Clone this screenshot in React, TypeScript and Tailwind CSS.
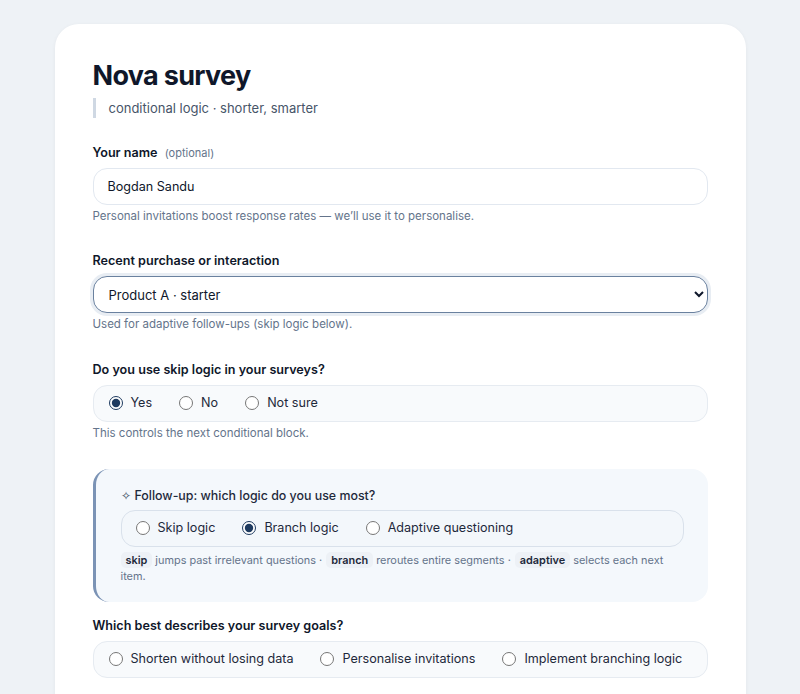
import * as React from "react";

const font = { fontFamily: "Inter, 'Noto Sans', sans-serif" };

type Opt = { id: string; label: string };

function RadioRow({
  name,
  options,
  value,
  tint = "bg-[#f8fafc] border-[#e6ebf1]",
  pad = "pl-[15px]",
}: {
  name: string;
  options: Opt[];
  value?: string;
  tint?: string;
  pad?: string;
}): JSX.Element {
  const [sel, setSel] = React.useState(value);
  return (
    <div
      className={`flex h-[37px] items-center gap-x-[27px] rounded-[14px] border ${tint} ${pad}`}
    >
      {options.map((o) => (
        <label
          key={o.id}
          className="flex cursor-pointer items-center text-[12.6px] text-[#1e293b]"
        >
          <input
            type="radio"
            name={name}
            checked={sel === o.id}
            onChange={() => setSel(o.id)}
            className="m-0 mr-2 h-[14px] w-[14px] accent-[#1e3a5f]"
          />
          {o.label}
        </label>
      ))}
    </div>
  );
}

function Label({ children }: { children: React.ReactNode }): JSX.Element {
  return (
    <div className="mb-[5px] text-[12.6px] font-semibold leading-5 text-[#0f172a]">
      {children}
    </div>
  );
}

function Help({ children }: { children: React.ReactNode }): JSX.Element {
  return <p className="mt-[3px] text-[11.5px] leading-4 text-[#64748b]">{children}</p>;
}

// small code-ish tag used inside the follow-up hint
function Chip({ children }: { children: React.ReactNode }): JSX.Element {
  return (
    <code
      className="ml-[4px] mr-[3px] inline-block rounded-[5px] bg-[#edf1f6] px-[5px] text-[10.9px] font-semibold leading-4 text-[#1e293b] first:ml-0"
      style={font}
    >
      {children}
    </code>
  );
}

export default function App(): JSX.Element {
  const [name, setName] = React.useState("Bogdan Sandu");
  return (
    <div className="min-h-[694px] bg-[#eef2f6] pt-6" style={font}>
      <div className="mx-auto w-[691px] rounded-3xl bg-white px-[38px] pb-10 pt-[34px] shadow-[0_1px_4px_rgba(15,23,42,0.05)]">
        <h1 className="text-[27px] font-bold leading-9 tracking-tight text-[#0f172a]">
          Nova survey
        </h1>
        <p className="mt-1 border-l-[3px] border-[#cfd8e3] pl-[13px] text-[13px] leading-5 text-[#475569]">
          conditional logic · shorter, smarter
        </p>

        <div className="mt-[25px]">
          <Label>
            Your name{" "}
            <span className="ml-1 text-[11px] font-normal text-[#64748b]">
              (optional)
            </span>
          </Label>
          <input
            value={name}
            onChange={(e) => setName(e.target.value)}
            className="h-[37px] w-full rounded-[14px] border border-[#e2e8f0] bg-white px-[14px] text-[12.6px] text-[#0f172a] outline-none"
          />
          <Help>
            Personal invitations boost response rates — we’ll use it to personalise.
          </Help>
        </div>

        <div className="mt-[27px]">
          <Label>Recent purchase or interaction</Label>
          <select
            defaultValue="a-starter"
            className="h-[37px] w-full rounded-[14px] border border-[#6a819f] bg-white pl-[11px] pr-2 text-[13px] text-[#0f172a] outline-none ring-[3px] ring-[#e8edf3]"
          >
            <option value="a-starter">Product A · starter</option>
            <option value="a-pro">Product A · pro</option>
            <option value="b">Product B</option>
          </select>
          <Help>Used for adaptive follow-ups (skip logic below).</Help>
        </div>

        <div className="mt-[28px]">
          <Label>Do you use skip logic in your surveys?</Label>
          <RadioRow
            name="skip"
            value="yes"
            options={[
              { id: "yes", label: "Yes" },
              { id: "no", label: "No" },
              { id: "unsure", label: "Not sure" },
            ]}
          />
          <Help>This controls the next conditional block.</Help>
        </div>

        <div className="mt-7 rounded-[16px] border-l-[3px] border-[#7b93b5] bg-[#f4f8fc] pb-[18px] pl-[25px] pr-6 pt-[17px]">
          <div className="mb-1 text-[12.4px] font-medium leading-5 text-[#1e293b]">
            <span className="mr-1 text-[#475569]">✧</span>Follow-up: which logic do you use most?
          </div>
          <RadioRow
            name="logic"
            value="branch"
            tint="bg-[#f3f7fb] border-[#d9e1eb]"
            pad="pl-[14px]"
            options={[
              { id: "skip", label: "Skip logic" },
              { id: "branch", label: "Branch logic" },
              { id: "adaptive", label: "Adaptive questioning" },
            ]}
          />
          <p className="mt-[5px] text-[10.9px] leading-4 text-[#64748b]">
            <Chip>skip</Chip>
            <span>jumps past irrelevant questions ·</span>
            <Chip>branch</Chip>
            <span>reroutes entire segments ·</span>
            <Chip>adaptive</Chip>
            <span>selects each next</span> <span>item.</span>
          </p>
        </div>

        <div className="mt-[14px]">
          <Label>Which best describes your survey goals?</Label>
          <RadioRow
            name="goals"
            options={[
              { id: "shorten", label: "Shorten without losing data" },
              { id: "personal", label: "Personalise invitations" },
              { id: "branching", label: "Implement branching logic" },
            ]}
          />
        </div>
      </div>
    </div>
  );
}
